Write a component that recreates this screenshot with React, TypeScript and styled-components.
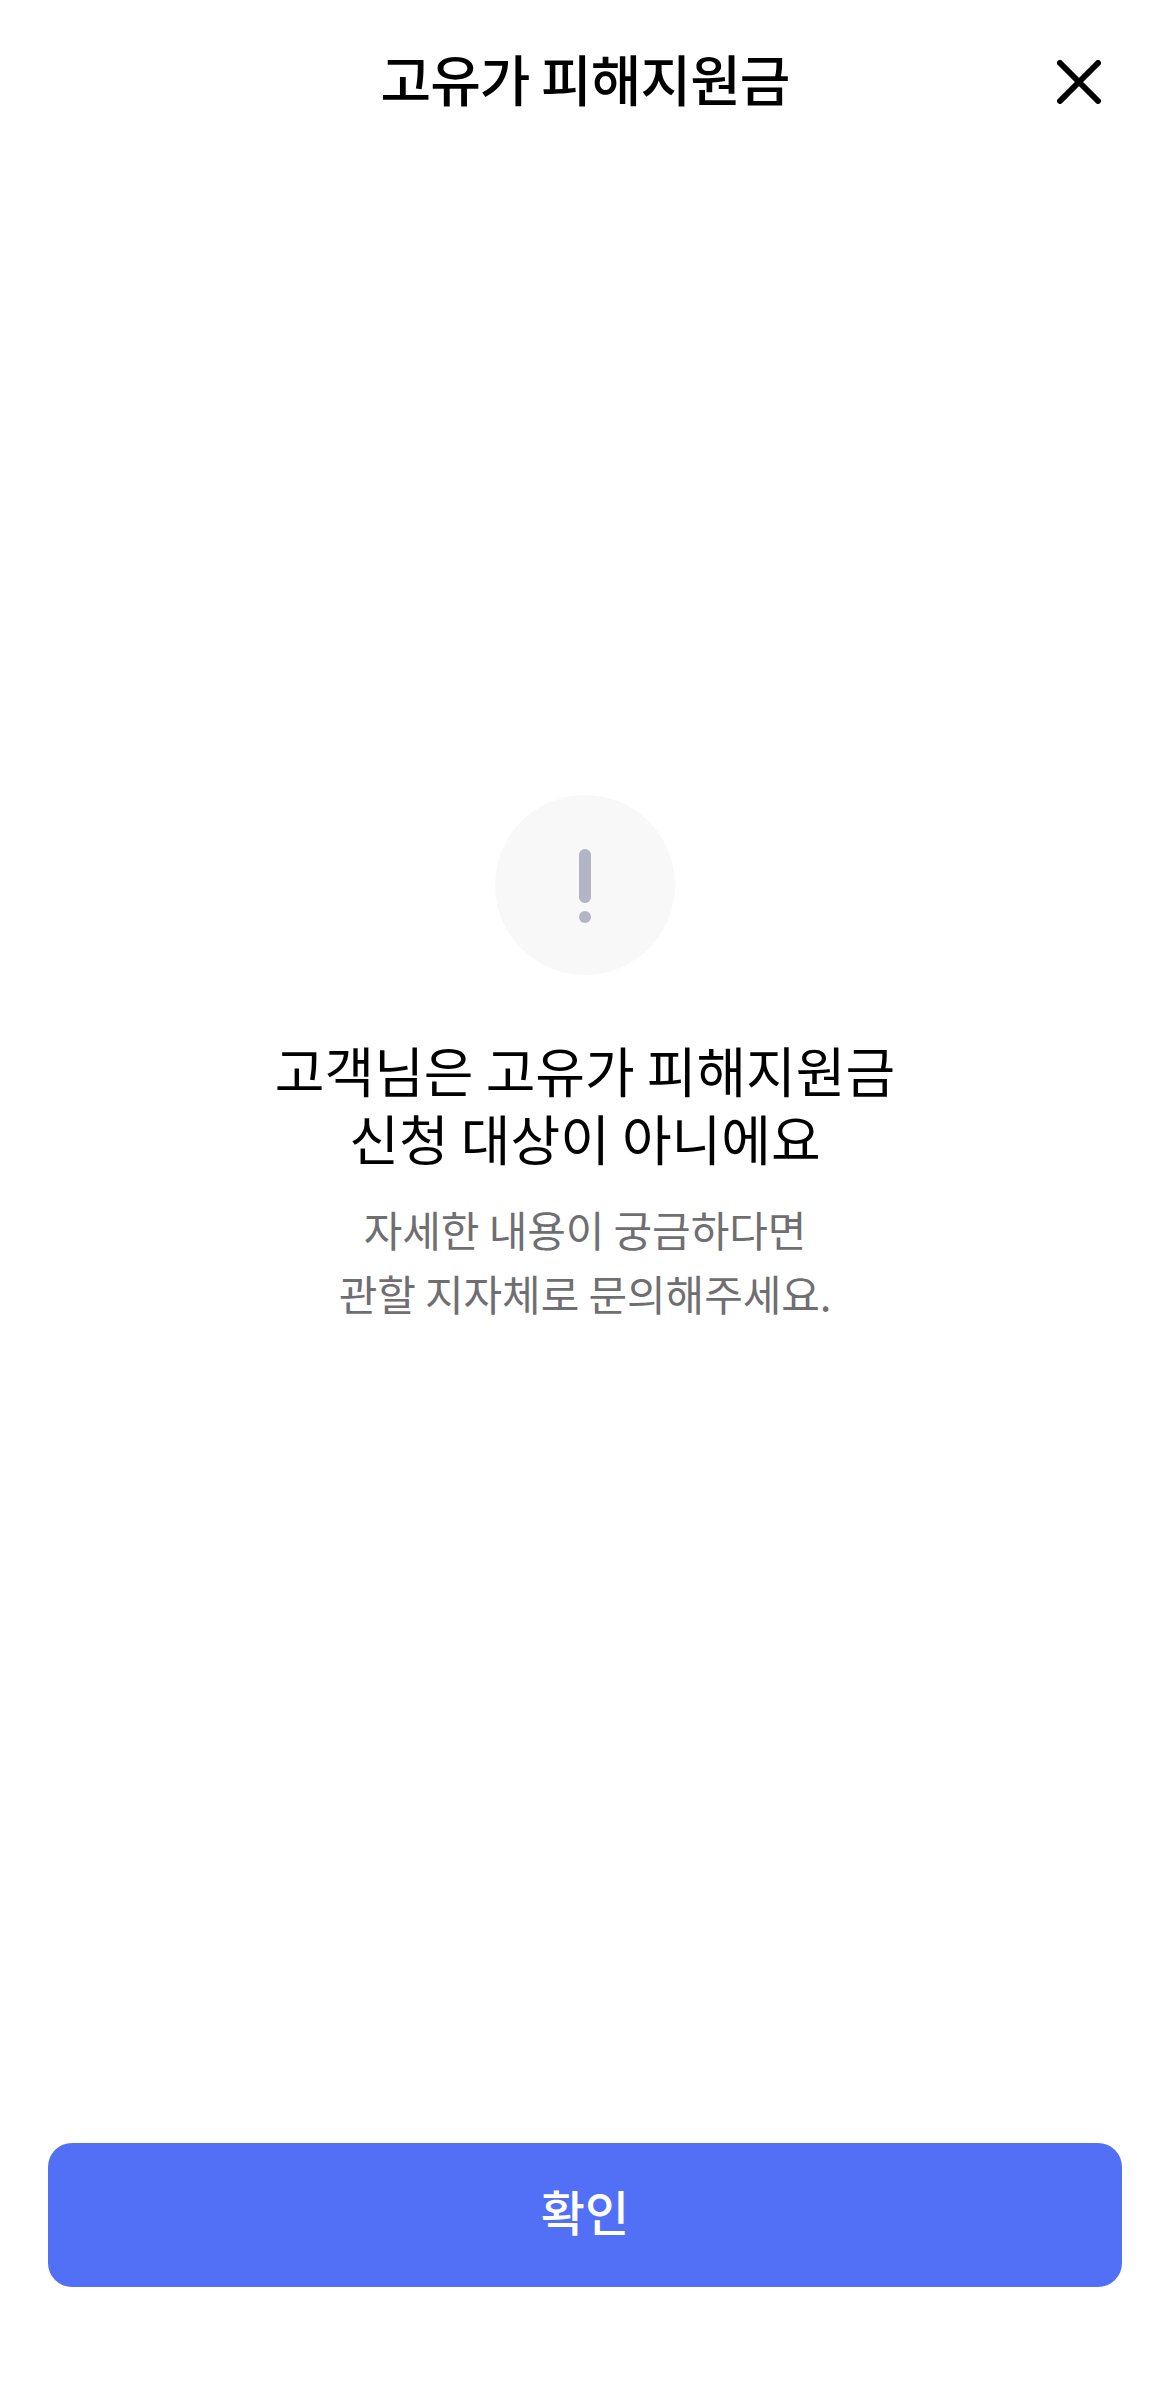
import styled, { createGlobalStyle } from "styled-components";

const GlobalStyle = createGlobalStyle`
  html, body {
    margin: 0;
    padding: 0;
    background: #ffffff;
  }
  * {
    box-sizing: border-box;
  }
`;

export default function App() {
  return (
    <Page>
      <GlobalStyle />
      <Header>
        <Title>고유가 피해지원금</Title>
        <CloseButton aria-label="닫기">
          <svg width="44" height="44" viewBox="0 0 44 44" fill="none">
            <path d="M3 3L41 41M41 3L3 41" stroke="#000000" strokeWidth="6" strokeLinecap="round" />
          </svg>
        </CloseButton>
      </Header>
      <Main>
        <IconCircle>
          <Bar />
          <Dot />
        </IconCircle>
        <Heading>
          고객님은 고유가 피해지원금
          <br />
          신청 대상이 아니에요
        </Heading>
        <Description>
          자세한 내용이 궁금하다면
          <br />
          관할 지자체로 문의해주세요.
        </Description>
      </Main>
      <Footer>
        <ConfirmButton>확인</ConfirmButton>
      </Footer>
    </Page>
  );
}

const Page = styled.div`
  display: flex;
  flex-direction: column;
  width: 1170px;
  height: 2387px;
  background: #ffffff;
  font-family: "Noto Sans CJK KR", "Noto Sans", sans-serif;
`;
const Header = styled.header`
  position: relative;
  display: flex;
  align-items: center;
  justify-content: center;
  height: 162px;
  padding-bottom: 8px;
`;
const Title = styled.h1`
  margin: 0;
  font-size: 55px;
  font-weight: 500;
  letter-spacing: -0.9px;
  color: #000000;
`;
const CloseButton = styled.button`
  position: absolute;
  top: 60px;
  right: 69px;
  display: flex;
  width: 44px;
  height: 44px;
  padding: 0;
  border: none;
  background: none;
`;
const Main = styled.main`
  flex: 1;
  display: flex;
  flex-direction: column;
  align-items: center;
  padding-top: 633px;
`;
const IconCircle = styled.div`
  display: flex;
  flex-direction: column;
  align-items: center;
  gap: 8px;
  width: 180px;
  height: 180px;
  padding-top: 54px;
  border-radius: 50%;
  background: #f8f8f8;
`;
const Bar = styled.div`
  width: 12px;
  height: 54px;
  border-radius: 6px;
  background: #b2b5c4;
`;
const Dot = styled.div`
  width: 12px;
  height: 12px;
  border-radius: 50%;
  background: #b2b5c4;
`;
const Heading = styled.h2`
  margin: 61px 0 0;
  font-size: 54px;
  font-weight: 400;
  line-height: 68px;
  letter-spacing: 0;
  text-align: center;
  color: #000000;
`;
const Description = styled.p`
  margin: 25px 0 0;
  font-size: 42px;
  font-weight: 400;
  line-height: 64px;
  letter-spacing: -0.1px;
  text-align: center;
  color: #6f6f72;
`;
const Footer = styled.footer`
  padding: 0 48px 100px;
`;
const ConfirmButton = styled.button`
  width: 100%;
  height: 144px;
  padding: 0 0 10px;
  border: none;
  border-radius: 24px;
  background: #5170f6;
  font-family: inherit;
  font-size: 48px;
  font-weight: 500;
  color: #ffffff;
`;
